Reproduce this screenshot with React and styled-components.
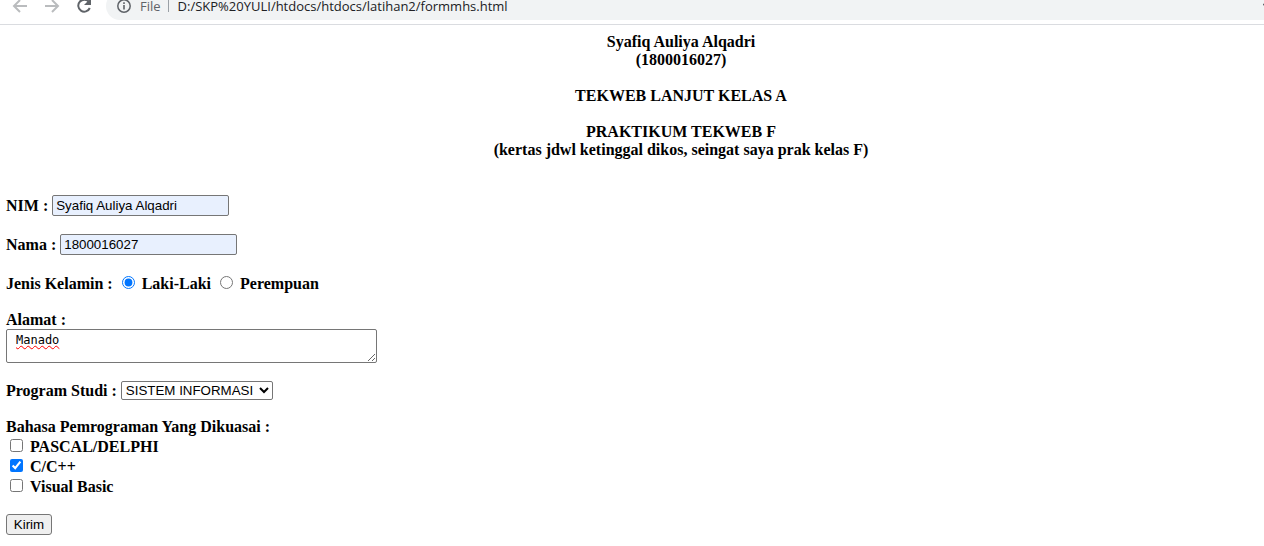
import React from 'react';
import styled, { createGlobalStyle } from 'styled-components';

const GlobalStyle = createGlobalStyle`
  * { box-sizing: border-box; }
  body {
    margin: 0;
    background: #fff;
    color: #000;
    font: bold 16px/18px "Liberation Serif", "Times New Roman", serif;
    overflow-x: hidden;
  }
`;

const Toolbar = styled.header`
  display: flex;
  align-items: flex-start;
  height: 25px;
  padding-left: 12px;
  overflow: hidden;
  border-bottom: 1px solid #dadce0;
`;

const Navigation = styled.nav`
  display: flex;
  gap: 16px;
  width: 94px;
  margin-top: -4px;
`;

const NavButton = styled.button`
  width: 16px;
  height: 20px;
  padding: 0;
  border: 0;
  background: none;
  color: ${({ $dim }) => ($dim ? '#babcbe' : '#5f6368')};
  svg { display: block; }
`;

const AddressBar = styled.div`
  flex: 1;
  display: flex;
  align-items: center;
  height: 28px;
  margin-top: -8px;
  padding-left: 11px;
  border-radius: 14px 0 0 14px;
  background: #f1f3f4;
  color: #5f6368;
  font: 13px/18px "Open Sans", "Noto Sans", sans-serif;
  svg { flex: none; }
`;

const Scheme = styled.span`
  margin-left: 9px;
  padding-right: 7px;
  border-right: 1px solid #9aa0a6;
  line-height: 12px;
`;

const Address = styled.input`
  flex: 1;
  min-width: 0;
  margin-left: 9px;
  padding: 0;
  border: 0;
  outline: 0;
  background: none;
  color: #202124;
  font: inherit;
`;

const BookmarkButton = styled.button`
  width: 16px;
  height: 16px;
  margin-right: -15px;
  padding: 0;
  border: 0;
  background: none;
  color: #5f6368;
  svg { display: block; }
`;

const Page = styled.main`
  padding: 8px 6px;
`;

const Heading = styled.div`
  display: flex;
  flex-direction: column;
  gap: 18px;
  margin-bottom: 36px;
  padding-left: 98px;
  text-align: center;
`;

const HeadingText = styled.p`
  margin: 0;
`;

const Form = styled.form`
  display: flex;
  flex-direction: column;
  align-items: flex-start;
  gap: 18px;
`;

const Row = styled.div`
  display: flex;
  align-items: center;
  gap: 4px;
`;

const Stack = styled.div`
  display: flex;
  flex-direction: column;
  align-items: flex-start;
`;

const Group = styled.fieldset`
  display: flex;
  flex-direction: ${({ $inline }) => ($inline ? 'row' : 'column')};
  align-items: flex-start;
  height: ${({ $inline }) => ($inline ? '20px' : 'auto')};
  margin: 0;
  padding: 0;
  border: 0;
`;

const GroupTitle = styled.legend`
  padding: 0;
  ${({ $inline }) => $inline && 'float: left; line-height: 22px; margin-right: 5px;'}
`;

const TextInput = styled.input`
  width: 177px;
  height: 21px;
  padding: 1px 3px;
  border: 1px solid #767676;
  border-radius: 2px;
  background: #e8f0fe;
  color: #000;
  font-family: "Liberation Sans", Arial, sans-serif;
`;

const Choice = styled.label`
  display: flex;
  align-items: center;
  height: 20px;
  margin-right: 5px;
  padding-top: 2px;
  input {
    width: 13px;
    height: 13px;
    margin: 0 7px 4px 4px;
    accent-color: #0075ff;
  }
`;

const AddressArea = styled.textarea`
  display: block;
  width: 371px;
  height: 34px;
  padding: 2px 9px;
  border: 1px solid #767676;
  border-radius: 2px;
  color: #000;
  font: 12px/16px "DejaVu Sans Mono", monospace;
  text-decoration: underline wavy #f00 1px;
`;

const Select = styled.select`
  width: 152px;
  height: 19px;
  padding: 0;
  border: 1px solid #767676;
  border-radius: 2px;
  background: #fff;
  color: #000;
  font-family: "Liberation Sans", Arial, sans-serif;
`;

const SubmitButton = styled.button`
  width: 46px;
  height: 21px;
  padding: 0;
  border: 1px solid #767676;
  border-radius: 3px;
  background: #efefef;
  color: #000;
  font-family: "Liberation Sans", Arial, sans-serif;
`;

const Arrow = ({ flip }) => (
  <svg width="16" height="20" viewBox="0 0 16 20" fill="none" stroke="currentColor" strokeWidth="2">
    <path d={flip ? 'M1 10H14M8 4l6 6-6 6' : 'M15 10H2M8 4l-6 6 6 6'} />
  </svg>
);

const Reload = () => (
  <svg width="16" height="20" viewBox="0 0 16 20" fill="none">
    <path d="M13.2 6.2A6 6 0 1 0 13.8 12" stroke="currentColor" strokeWidth="2" />
    <path d="M15 2v7H8z" fill="currentColor" />
  </svg>
);

const Info = () => (
  <svg width="14" height="14" viewBox="0 0 14 14" fill="none" stroke="#5f6368">
    <circle cx="7" cy="7" r="6.2" strokeWidth="1.5" />
    <path d="M7 6v4.5M7 3.3v1.7" strokeWidth="1.6" />
  </svg>
);

const Star = () => (
  <svg width="16" height="16" viewBox="0 0 16 16" fill="none" stroke="currentColor" strokeWidth="1.4">
    <path d="M8 1l2.1 4.9 5.4.5-4.1 3.5 1.3 5.2L8 12.3l-4.7 2.8 1.3-5.2L.5 6.4l5.4-.5z" />
  </svg>
);

const languages = [
  { name: 'PASCAL/DELPHI' },
  { name: 'C/C++', checked: true },
  { name: 'Visual Basic' },
];

export default function App() {
  return (
    <>
      <GlobalStyle />
      <Toolbar>
        <Navigation>
          <NavButton type="button" $dim><Arrow /></NavButton>
          <NavButton type="button" $dim><Arrow flip /></NavButton>
          <NavButton type="button"><Reload /></NavButton>
        </Navigation>
        <AddressBar>
          <Info />
          <Scheme>File</Scheme>
          <Address type="text" spellCheck={false} defaultValue="D:/SKP%20YULI/htdocs/htdocs/latihan2/formmhs.html" />
          <BookmarkButton type="button"><Star /></BookmarkButton>
        </AddressBar>
      </Toolbar>
      <Page>
        <Heading>
          <HeadingText>Syafiq Auliya Alqadri<br />(1800016027)</HeadingText>
          <HeadingText>TEKWEB LANJUT KELAS A</HeadingText>
          <HeadingText>PRAKTIKUM TEKWEB F<br />(kertas jdwl ketinggal dikos, seingat saya prak kelas F)</HeadingText>
        </Heading>
        <Form onSubmit={(event) => event.preventDefault()}>
          <Row>
            <label htmlFor="nim">NIM :</label>
            <TextInput id="nim" type="text" defaultValue="Syafiq Auliya Alqadri" />
          </Row>
          <Row>
            <label htmlFor="nama">Nama :</label>
            <TextInput id="nama" type="text" defaultValue="1800016027" />
          </Row>
          <Group $inline>
            <GroupTitle $inline>Jenis Kelamin :</GroupTitle>
            <Choice><input type="radio" name="gender" defaultChecked />Laki-Laki</Choice>
            <Choice><input type="radio" name="gender" />Perempuan</Choice>
          </Group>
          <Stack>
            <label htmlFor="alamat">Alamat :</label>
            <AddressArea id="alamat" spellCheck={false} defaultValue="Manado" />
          </Stack>
          <Row>
            <label htmlFor="prodi">Program Studi :</label>
            <Select id="prodi"><option>SISTEM INFORMASI</option></Select>
          </Row>
          <Group>
            <GroupTitle>Bahasa Pemrograman Yang Dikuasai :</GroupTitle>
            {languages.map(({ name, checked }) => (
              <Choice key={name}><input type="checkbox" defaultChecked={checked} />{name}</Choice>
            ))}
          </Group>
          <SubmitButton type="submit">Kirim</SubmitButton>
        </Form>
      </Page>
    </>
  );
}
